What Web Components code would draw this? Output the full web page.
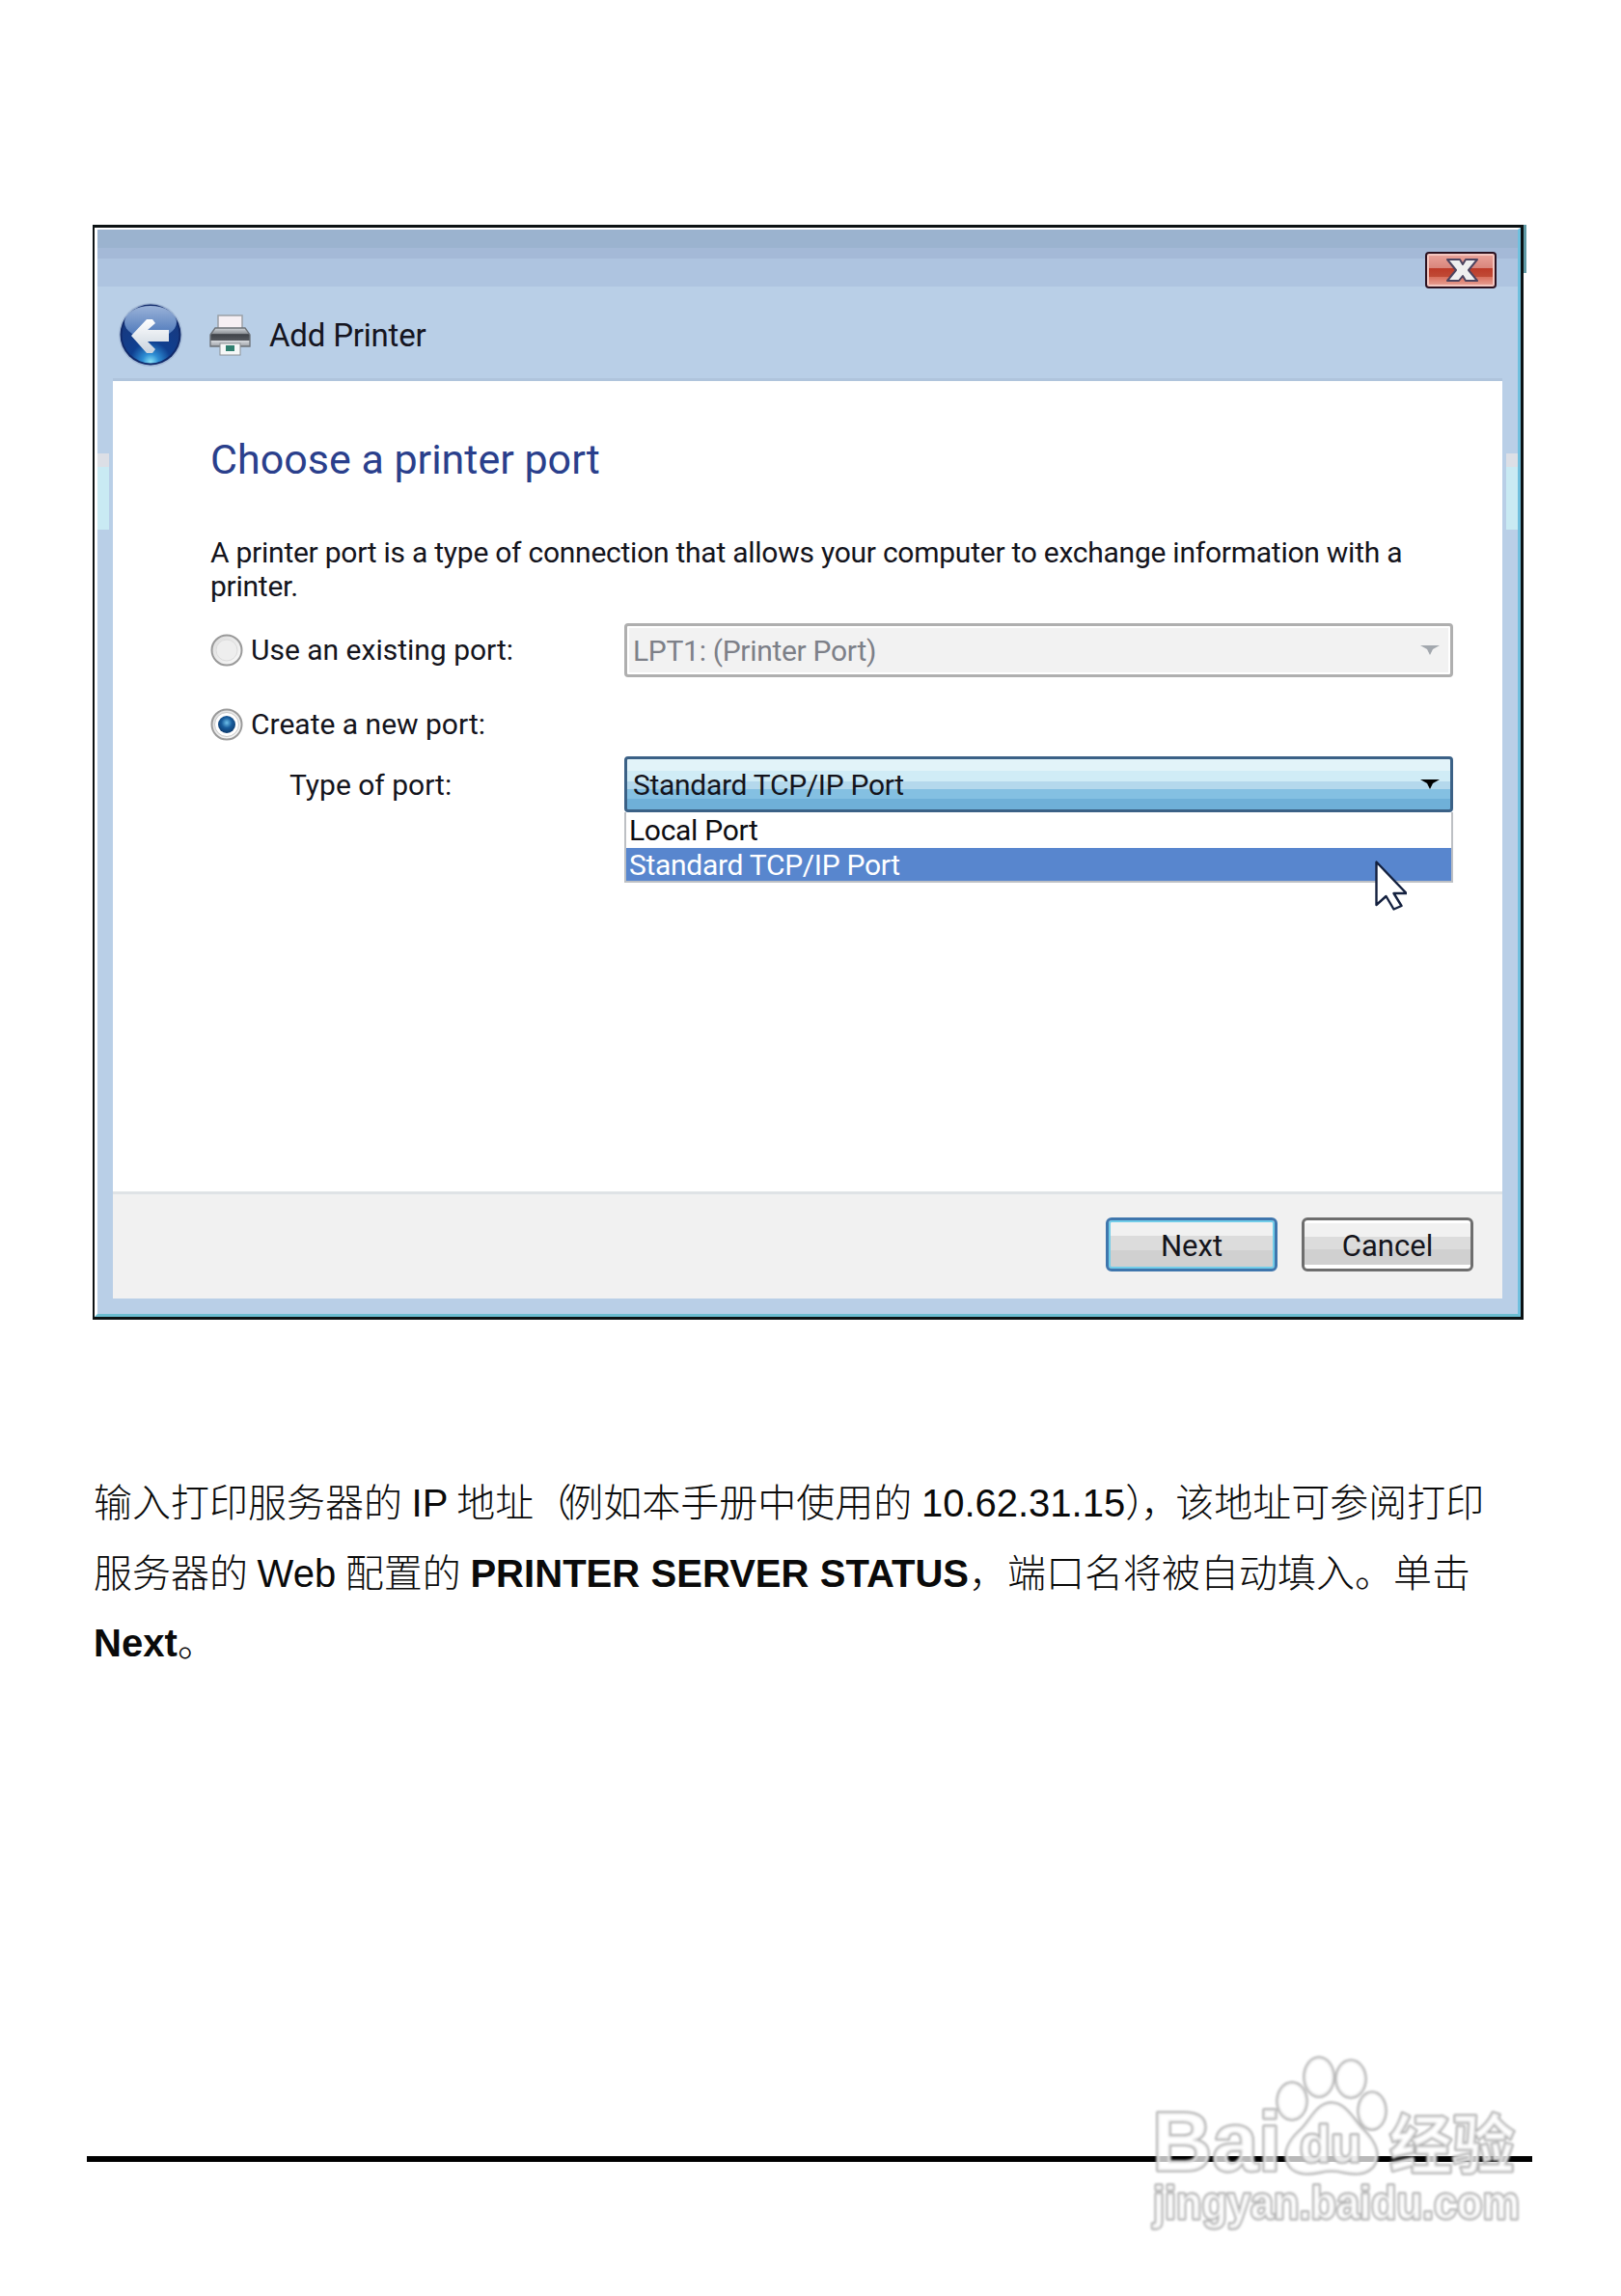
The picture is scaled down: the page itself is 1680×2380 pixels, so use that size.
<!DOCTYPE html>
<html lang="zh-CN"><head><meta charset="utf-8"><title>Add Printer</title>
<style>html,body{margin:0;background:#fff}</style></head>
<body>
<doc-page>
<win-dialog>
  <win-header slot="header" title-text="Add Printer"></win-header>
  <h-title>Choose a printer port</h-title>
  <win-desc>A printer port is a type of connection that allows your computer to exchange information with a<br>printer.</win-desc>
  <port-row><win-radio slot="left">Use an existing port:</win-radio><win-combo slot="right" disabled>LPT1: (Printer Port)</win-combo></port-row>
  <port-row class="r2"><win-radio slot="left" checked>Create a new port:</win-radio></port-row>
  <port-row class="r3"><win-label slot="left">Type of port:</win-label><win-combo slot="right" open>Standard TCP/IP Port</win-combo></port-row>
  <win-button slot="footer" default>Next</win-button>
  <win-button slot="footer">Cancel</win-button>
</win-dialog>
<doc-text></doc-text>
<baidu-mark></baidu-mark>
</doc-page>
<script>
const UI='Roboto,"Noto Sans",sans-serif';
function def(name,css,html,extra){
  class C extends HTMLElement{
    constructor(){super();const s=this.attachShadow({mode:'open'});
      s.innerHTML='<style>'+css+'</style>'+(typeof html==='function'?html(this):html);}
    connectedCallback(){if(extra)extra(this);}
  }
  customElements.define(name,C);
}
def('doc-page',`:host{display:block;position:relative;box-sizing:border-box;width:1680px;height:2380px;padding:233px 0 0 96px;overflow:hidden;background:#fff}
  .rule{height:6px;width:1498px;margin:495.5px 0 0 -6px;background:#000}`,
  `<slot></slot><div class="rule"></div>`);
def('win-dialog',`:host{display:block;box-sizing:border-box;position:relative;width:1483px;height:1135px;border:solid #0c1214;border-width:3px 3px 3px 2px;background:#b9cfe7;font-family:${UI};color:#111}
  .inner{box-sizing:border-box;height:100%;display:flex;flex-direction:column;border:solid #fff;border-width:2px 0 0 3px;border-right:3px solid #6fc0de;border-bottom:3px solid #6bbdd0}
  .panel{flex:1;display:flex;flex-direction:column;margin:0 16px 16px;border-top:3px solid #afc4dc;position:relative}
  .main{flex:1;background:#fff;padding:51px 51px 0 101px}
  .foot{box-sizing:border-box;height:111px;background:#f1f1f1;border-top:3px solid #dfe3e6;display:flex;justify-content:flex-end;align-items:flex-start;gap:25px;padding:24px 30px 0 0}
  .strip{position:absolute;top:75px;width:12px;height:79px;background:linear-gradient(#dcdfe6 0 14px,#c9eaf3 14px)}
  .s1{left:-16px}.s2{right:-16px}
  .tc{position:absolute;top:-3px;right:-6px;width:3px;height:50px;background:#5f9aa6}`,
  `<div class="inner"><slot name="header"></slot>
   <div class="panel"><div class="strip s1"></div><div class="strip s2"></div><div class="main"><slot></slot></div><div class="foot"><slot name="footer"></slot></div></div></div><div class="tc"></div>`);
def('win-header',`:host{display:block;height:154px}
  .bar{height:59px;box-sizing:border-box;background:linear-gradient(#9bb3cf 0 19px,#a4b9d7 19px 30px,#aec4e0 30px);display:flex;justify-content:flex-end;padding:22px 21px 0 0}
  .row{display:flex;align-items:center;height:95px;padding-left:22px;box-sizing:border-box;padding-top:5px}
  .back{width:66px;height:66px;flex:none}
  .pr{width:43px;height:43px;margin-left:28px;flex:none}
  .t{margin-left:19px;font-size:33px;letter-spacing:-.2px;color:#15151f}
  .x{width:76px;height:40px;flex:none;position:relative;z-index:1}`,
  el=>`<div class="bar"><svg class="x" viewBox="0 0 76 40" aria-hidden="true">
    <defs><linearGradient id="cl" x1="0" x2="0" y1="0" y2="1"><stop offset="0" stop-color="#e8a097"/><stop offset=".42" stop-color="#d9867c"/><stop offset=".44" stop-color="#bd3a28"/><stop offset=".72" stop-color="#c04a36"/><stop offset=".74" stop-color="#d9705e"/><stop offset="1" stop-color="#e59a8e"/></linearGradient></defs>
    <rect x="1" y="1" width="74" height="38" rx="4" fill="#2c1220"/><rect x="3" y="3" width="70" height="34" rx="2" fill="#f4c6bf"/><rect x="5" y="5" width="66" height="30" fill="url(#cl)"/>
    <path d="M24 9h13l3 5 3-5h12l-9 11 9 11H43l-3-5-4 5H24l9-11z" fill="#efefef" stroke="#4c4460" stroke-width="2" stroke-linejoin="round"/></svg></div>
   <div class="row"><svg class="back" viewBox="0 0 66 66" aria-hidden="true">
    <defs><radialGradient id="b1" cx=".5" cy=".98" r=".72"><stop offset="0" stop-color="#8ae4f8"/><stop offset=".2" stop-color="#2e8ed4"/><stop offset=".5" stop-color="#0f3f90"/><stop offset="1" stop-color="#163a82"/></radialGradient>
    <linearGradient id="b2" x1="0" x2="0" y1="0" y2="1"><stop offset="0" stop-color="#a9c0e2"/><stop offset="1" stop-color="#4a78bd"/></linearGradient>
    <linearGradient id="b3" x1="0" x2="0" y1="0" y2="1"><stop offset="0" stop-color="#fff"/><stop offset="1" stop-color="#c9d3de"/></linearGradient></defs>
    <circle cx="33" cy="33" r="33" fill="#a3b9d6"/><circle cx="33" cy="33" r="31.5" fill="#10296a"/><circle cx="33" cy="33" r="29.5" fill="url(#b1)"/>
    <ellipse cx="33" cy="20" rx="27" ry="17" fill="url(#b2)" opacity=".9"/>
    <path d="M13 34 29 17h6l3 4-8 7h22v12H30l8 8-3 4h-6z" fill="url(#b3)"/></svg>
    <svg class="pr" viewBox="0 0 43 43" aria-hidden="true">
    <defs><linearGradient id="p1" x1="0" x2="0" y1="0" y2="1"><stop offset="0" stop-color="#d2d6db"/><stop offset=".3" stop-color="#8f9499"/><stop offset=".35" stop-color="#3f4349"/><stop offset=".68" stop-color="#55595f"/><stop offset=".7" stop-color="#d5d8dc"/><stop offset="1" stop-color="#9ea2a7"/></linearGradient></defs>
    <rect x="9" y="1" width="25" height="18" fill="#f6f0f4" stroke="#9ba0a6" stroke-width="1.5"/>
    <path d="M6 14h31l5 7v12H1V21z" fill="url(#p1)" stroke="#6c7177" stroke-width="1.3"/>
    <rect x="11" y="30" width="21" height="12" fill="#f5f7f7" stroke="#8c9196"/><rect x="17" y="32" width="9" height="6" fill="#2f7f6f"/></svg>
    <span class="t">${el.getAttribute('title-text')}</span></div>`);
def('h-title',`:host{display:block;font-size:43px;line-height:60px;color:#2a3f8c}`,`<slot></slot>`);
def('win-desc',`:host{display:block;font-size:30px;line-height:35px;letter-spacing:-.25px;margin:49px 0 21px;white-space:nowrap;color:#14141c}`,`<slot></slot>`);
def('port-row',`:host{display:grid;grid-template-columns:429px 859px;align-items:center}
  :host(.r2){height:40px;margin-top:29px}:host(.r3){margin-top:13px}
  .l{display:block}`,`<slot name="left" class="l"></slot><slot name="right"></slot>`);
def('win-radio',`:host{display:flex;align-items:center;font-size:30px;color:#14141c;white-space:nowrap}
  span{position:relative;top:-1px}
  svg{width:36px;height:36px;margin-right:7px;flex:none;margin-left:-1px}`,
  el=>`<svg viewBox="0 0 36 36" aria-hidden="true"><defs><radialGradient id="r" cx=".5" cy=".4" r=".6"><stop offset="0" stop-color="#6ec0ea"/><stop offset=".5" stop-color="#185c9c"/><stop offset="1" stop-color="#0c3a6e"/></radialGradient><linearGradient id="g" x1="0" y1="0" x2="1" y2="1"><stop offset="0" stop-color="#dcdcdc"/><stop offset="1" stop-color="#fbfbfb"/></linearGradient></defs>
  <circle cx="18" cy="18" r="15.5" fill="url(#g)" stroke="#9a9a9a" stroke-width="2"/>${el.hasAttribute('checked')?'<circle cx="18" cy="18" r="12.5" fill="#fff" stroke="#c8c8c8"/><circle cx="18" cy="18" r="9" fill="url(#r)"/>':'<circle cx="18" cy="18" r="11" fill="#eee" stroke="#dcdcdc"/>'}</svg><span><slot></slot></span>`);
def('win-label',`:host{display:block;padding-left:82px;font-size:30px;color:#14141c;white-space:nowrap}`,`<slot></slot>`);
def('win-combo',`:host{display:block;position:relative;box-sizing:border-box;height:56px;font-size:30px;letter-spacing:-.3px;white-space:nowrap}
  .box{box-sizing:border-box;height:100%;display:flex;align-items:center;justify-content:space-between;padding:0 11px 0 6px;border-radius:4px}
  :host([disabled]) .box{border:3px solid #afafaf;box-shadow:inset 0 0 0 2px #fff;background:#f2f2f2;color:#7d8088}
  :host([open]){height:58px}
  :host([open]) .box{border:3px solid #3b6186;color:#14141c;background:linear-gradient(#e2f3f9 0 12px,#d0ecf6 12px 23px,#b4d8ec 23px 31px,#84c0e2 31px 41px,#6fb0d8 41px)}
  svg{width:20px;height:12px}
  .menu{position:absolute;left:0;right:0;top:100%;height:73px;box-sizing:border-box;background:#fff;border:solid #bdc0c4;border-width:0 2px 2px 2px;display:flex;flex-direction:column}
  .i{height:37px;line-height:38px;padding-left:3px;box-sizing:border-box;color:#0d0d12}
  .i.sel{height:34px;line-height:36px;background:#5886ce;color:#fff;padding-left:3px}
  .cur{position:absolute;left:778px;top:108px;width:33px;height:52px;z-index:2}`,
  el=>{const open=el.hasAttribute('open');
   return `<div class="box"><span><slot></slot></span><svg viewBox="0 0 20 12" aria-hidden="true"><path d="M0 1h20l-7 4-3 6-3-6z" fill="${open?'#000':'#a3a8ae'}"/></svg></div>`+
   (open?`<div class="menu"><div class="i">Local Port</div><div class="i sel">Standard TCP/IP Port</div></div>
   <svg class="cur" viewBox="0 0 33 52" aria-hidden="true"><path d="M1.5 1.5V46l10-9 8 13.5 8-3.5-8-13h13z" fill="#fff" stroke="#14213f" stroke-width="2.4" stroke-linejoin="round"/></svg>`:'');});
def('win-button',`:host{display:flex;align-items:center;justify-content:center;box-sizing:border-box;width:178px;height:56px;padding-top:2px;border:3px solid #6e6e6e;border-radius:6px;font-size:31px;color:#15151c;background:linear-gradient(#fff 0 3px,#f1f1f1 3px 17px,#dcdcdc 17px 30px,#d0d0d0 30px 46px,#fff 46px)}
  :host([default]){border-color:#3f76ad;box-shadow:inset 0 0 0 2px #72cde9;background:linear-gradient(#f1f1f1 0 16px,#dcdcdc 16px 31px,#d0d0d0 31px)}`,`<slot></slot>`);
def('doc-text',`:host{display:block;margin:154px 0 0 1px;font:300 40px/72.5px "Liberation Sans","Noto Sans CJK SC",sans-serif;word-spacing:-1.5px;color:#0a0a0a;white-space:nowrap}
  b{font-weight:700;word-spacing:0;letter-spacing:.05px}.l{display:block}.pl{letter-spacing:-7px;margin-left:-1px}.pr{letter-spacing:-4px}`,
  `<span class="l">输入打印服务器的 IP 地址<span class="pl">（</span>例如本手册中使用的 10.62.31.15<span class="pr">），</span>该地址可参阅打印</span>
   <span class="l">服务器的 Web 配置的 <b>PRINTER SERVER STATUS</b>，端口名将被自动填入。单击</span>
   <span class="l"><b>Next</b>。</span>`);
def('baidu-mark',`:host{position:absolute;left:1180px;top:2130px;width:410px;height:200px;display:block;filter:blur(1px)}
  svg{width:410px;height:200px;overflow:visible}
  text,ellipse,path{fill:rgba(255,255,255,.72);stroke:#b0b0b0;stroke-width:3.5;paint-order:stroke;stroke-linejoin:round}
  text{font-family:"Liberation Sans","Noto Sans CJK SC",sans-serif;font-weight:700}`,
  `<svg viewBox="1180 2130 410 200"><ellipse cx="1367" cy="2153" rx="15" ry="20"/><ellipse cx="1400" cy="2155" rx="15" ry="19"/><ellipse cx="1339" cy="2178" rx="15" ry="19"/><ellipse cx="1422" cy="2188" rx="14" ry="19"/>
  <path d="M1380 2180c14 0 22 16 32 27 10 10 15 18 15 27 0 14-12 19-22 19-10 0-16-3-25-3s-15 3-25 3c-12 0-22-6-22-19 0-10 6-18 16-27 10-10 16-27 31-27z"/>
  <text x="1194" y="2250" font-size="88" textLength="134" lengthAdjust="spacingAndGlyphs">Bai</text>
  <text x="1347" y="2241" font-size="54" textLength="64" lengthAdjust="spacingAndGlyphs">du</text>
  <text x="1440" y="2247" font-size="66" textLength="130" lengthAdjust="spacingAndGlyphs">经验</text>
  <text x="1195" y="2300" font-size="48" textLength="380" lengthAdjust="spacingAndGlyphs">jingyan.baidu.com</text></svg>`);
</script>
</body></html>
